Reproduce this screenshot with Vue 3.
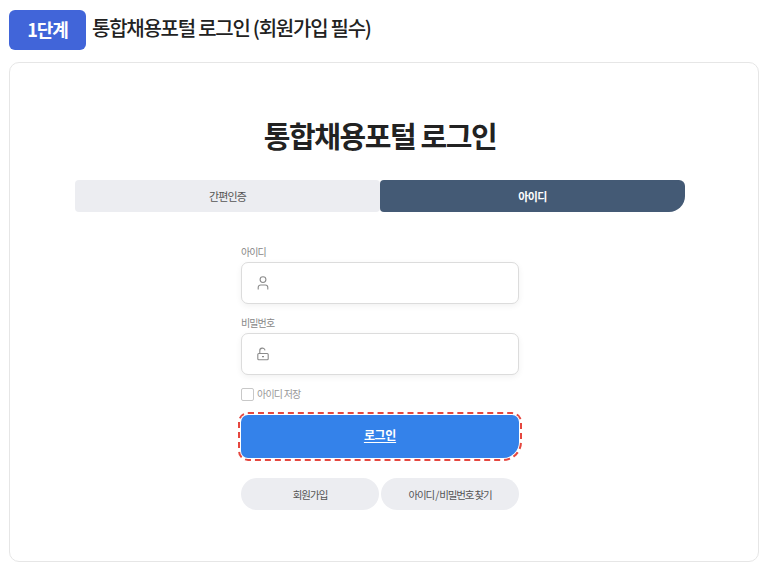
<template>
  <div class="page">
    <div class="step-head">
      <span class="step-badge">1단계</span>
      <h2 class="step-title">통합채용포털 로그인 (회원가입 필수)</h2>
    </div>

    <div class="card">
      <h1 class="login-title">통합채용포털 로그인</h1>

      <div class="tabs">
        <button
          v-for="tab in tabs"
          :key="tab"
          class="tab"
          :class="{ active: tab === activeTab }"
          @click="activeTab = tab"
        >{{ tab }}</button>
      </div>

      <form class="login-form" @submit.prevent>
        <label class="field-label">아이디</label>
        <div class="input-box">
          <svg class="input-icon" viewBox="0 0 12 14" width="12" height="14" fill="none" stroke="#8b8b8b" stroke-width="1.1">
            <circle cx="6" cy="3.6" r="2.9" />
            <path d="M1.2 13.5V11.5a2.5 2.5 0 0 1 2.5-2.5h4.6a2.5 2.5 0 0 1 2.5 2.5v2" />
          </svg>
          <input v-model="userId" type="text" />
        </div>

        <label class="field-label second">비밀번호</label>
        <div class="input-box">
          <svg class="input-icon" viewBox="0 0 12 14" width="12" height="14" fill="none" stroke="#8b8b8b" stroke-width="1.1">
            <rect x="0.8" y="6.5" width="10.4" height="6.2" rx="1" />
            <path d="M2.8 6.5V4a2.6 2.6 0 0 1 5.2-.6" />
            <path d="M5 9.6h2" stroke-width="1.4" />
          </svg>
          <input v-model="password" type="password" />
        </div>

        <label class="save-id">
          <span class="check"></span>
          <span class="save-text">아이디 저장</span>
        </label>

        <button class="login-btn" type="submit"><span>로그인</span></button>

        <div class="sub-buttons">
          <button type="button">회원가입</button>
          <button type="button" class="find-btn">아이디 / 비밀번호 찾기</button>
        </div>
      </form>
    </div>
  </div>
</template>

<script setup>
import { ref } from 'vue'

const tabs = ['간편인증', '아이디']
const activeTab = ref('아이디')
const userId = ref('')
const password = ref('')
</script>

<style scoped>
.page {
  width: 765px;
  height: 566px;
  padding: 10px 6px 4px 9px;
  box-sizing: border-box;
  background: #fff;
  font-family: "Noto Sans CJK KR", "Noto Sans", sans-serif;
  color: #222;
  overflow: hidden;
}

.step-head {
  display: flex;
  align-items: center;
  gap: 6px;
  height: 40px;
  margin-bottom: 12px;
}

.step-badge {
  width: 77px;
  height: 40px;
  line-height: 38px;
  text-align: center;
  border-radius: 6px;
  background: #4165d9;
  color: #fff;
  font-size: 18px;
  font-weight: 700;
  letter-spacing: -1px;
}

.step-title {
  margin: 0 0 6px;
  font-size: 20px;
  font-weight: 500;
  letter-spacing: -1.25px;
  color: #222;
}

.card {
  width: 750px;
  height: 500px;
  box-sizing: border-box;
  border: 1px solid #e6e6e6;
  border-radius: 10px;
  padding: 50px 8px 0 0;
  display: flex;
  flex-direction: column;
  align-items: center;
}

.login-title {
  margin: 0 0 23px;
  height: 44px;
  line-height: 44px;
  font-size: 29px;
  font-weight: 700;
  letter-spacing: -1.4px;
  color: #222;
}

.tabs {
  display: flex;
  width: 610px;
  height: 32px;
  margin-bottom: 31px;
}

.tab {
  flex: 1;
  border: none;
  background: #ecedf1;
  font-family: inherit;
  font-size: 11px;
  letter-spacing: -0.9px;
  color: #555;
  border-radius: 4px;
  padding: 0;
}

.tab.active {
  background: #445a75;
  color: #fff;
  font-weight: 700;
  letter-spacing: -0.7px;
  border-radius: 4px 6px 16px 4px;
}

.login-form {
  width: 278px;
  display: flex;
  flex-direction: column;
}

.field-label {
  height: 16px;
  line-height: 18px;
  margin-bottom: 3px;
  font-size: 10px;
  color: #888;
  letter-spacing: -0.9px;
}

.field-label.second {
  margin-top: 10px;
}

.input-box {
  display: flex;
  align-items: center;
  height: 42px;
  box-sizing: border-box;
  padding-left: 15px;
  border: 1px solid #dcdcdc;
  border-radius: 7px;
  background: #fff;
  box-shadow: 0 2px 6px rgba(0, 0, 0, 0.06);
}

.input-icon {
  flex-shrink: 0;
}

.input-box input {
  flex: 1;
  min-width: 0;
  margin-left: 8px;
  border: none;
  outline: none;
  background: transparent;
}

.save-id {
  display: flex;
  align-items: center;
  gap: 3px;
  height: 14px;
  margin-top: 12px;
  font-size: 10px;
  letter-spacing: -0.8px;
  color: #999;
}

.save-text {
  margin-bottom: 2px;
}

.check {
  width: 11px;
  height: 11px;
  border: 1px solid #c8c8c8;
  border-radius: 2px;
  background: #fff;
}

.login-btn {
  height: 43px;
  margin-top: 14px;
  padding: 0 0 4px;
  border: none;
  border-radius: 7px 7px 16px 7px;
  background: #3482ea;
  color: #fff;
  font-family: inherit;
  font-size: 12px;
  font-weight: 700;
  letter-spacing: -0.3px;
  text-decoration: underline;
  text-underline-offset: 2px;
  outline: 2px dashed #e5473f;
  outline-offset: 1px;
}

.sub-buttons {
  display: flex;
  gap: 2px;
  margin-top: 20px;
}

.sub-buttons button {
  flex: 1;
  height: 32px;
  padding: 0;
  border: none;
  border-radius: 16px;
  background: #ecedf1;
  color: #555;
  font-family: inherit;
  font-size: 10.5px;
  letter-spacing: -1px;
}

.sub-buttons .find-btn {
  letter-spacing: -1.15px;
  word-spacing: 0;
}
</style>
